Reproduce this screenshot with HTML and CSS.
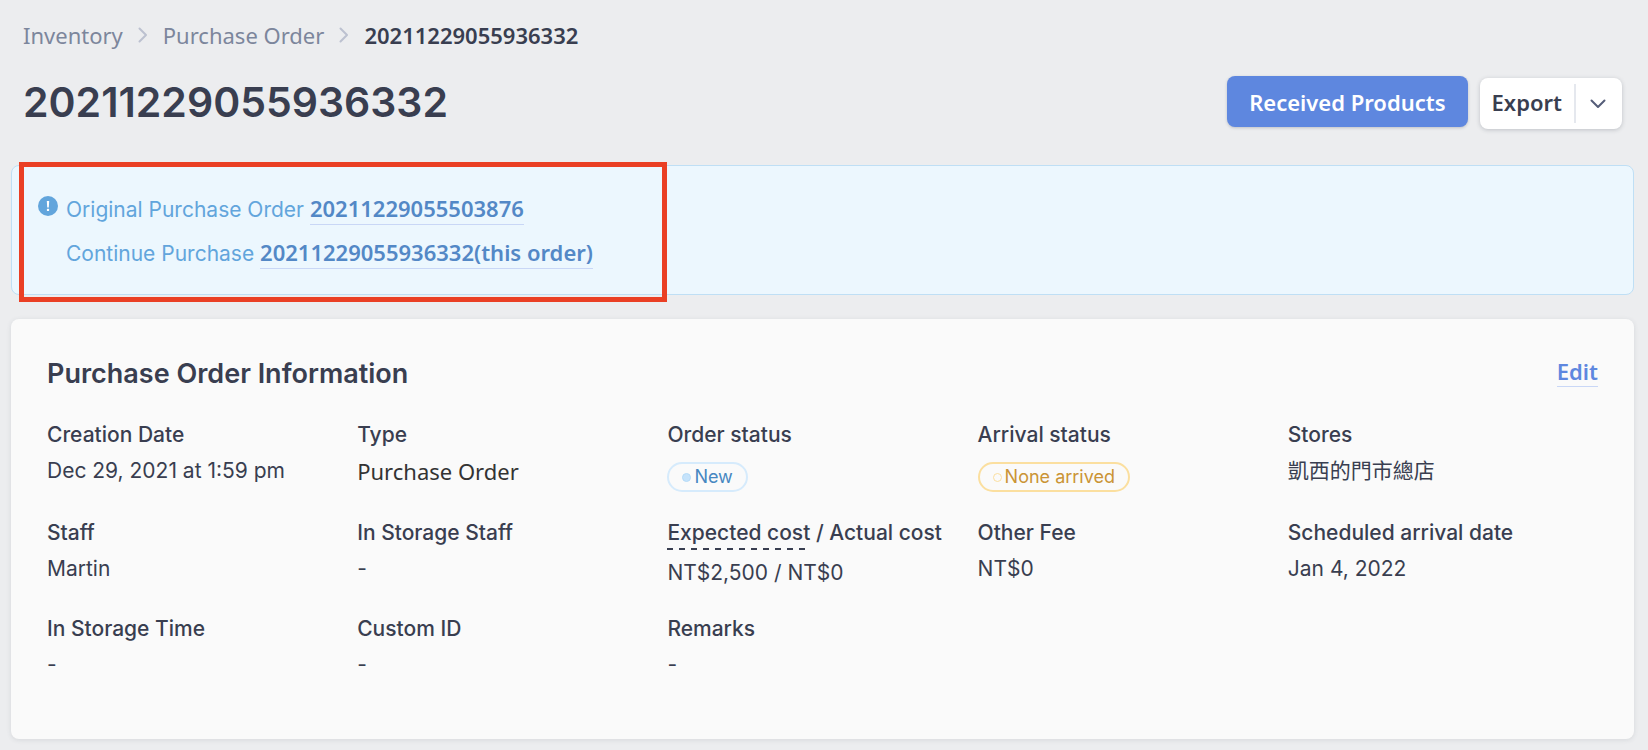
FILE: index.html
```html
<!DOCTYPE html>
<html lang="en">
<head>
<meta charset="utf-8">
<meta name="viewport" content="width=device-width, initial-scale=1">
<title>Purchase Order 20211229055936332</title>
<link rel="stylesheet" href="styles.css">
</head>
<body>
<div class="page">
  <nav class="breadcrumb" aria-label="Breadcrumb">
    <a href="#">Inventory</a>
    <svg class="crumb-arrow" viewBox="0 0 10 16" aria-hidden="true"><path d="M1.500 1.500 8 8l-6.500 6.500"/></svg>
    <a href="#">Purchase Order</a>
    <svg class="crumb-arrow" viewBox="0 0 10 16" aria-hidden="true"><path d="M1.500 1.500 8 8l-6.500 6.500"/></svg>
    <span class="crumb-current" aria-current="page">20211229055936332</span>
  </nav>

  <header class="header">
    <h1 class="title">20211229055936332</h1>
    <div class="actions">
      <button class="btn btn-primary" type="button">Received Products</button>
      <div class="split">
        <button class="btn split-main" type="button">Export</button>
        <button class="btn split-toggle" type="button" aria-label="Export options">
          <svg class="chevron" viewBox="0 0 16 10" aria-hidden="true"><path d="M1.500 1.500 8 8l6.500-6.500"/></svg>
        </button>
      </div>
    </div>
  </header>

  <section class="notice">
    <svg class="notice-icon" viewBox="0 0 20 20" aria-hidden="true"><circle cx="10" cy="10" r="10" fill="#62a5dc"/><path d="M8.800 5h2.400l-.4 6.400H9.200z" fill="#fff"/><rect x="8.900" y="12.800" width="2.200" height="2.200" rx=".6" fill="#fff"/></svg>
    <div class="notice-lines">
      <p class="notice-line">Original Purchase Order <a class="link" href="#">20211229055503876</a></p>
      <p class="notice-line">Continue Purchase <a class="link" href="#">20211229055936332(this order)</a></p>
    </div>
    <div class="highlight"></div>
  </section>

  <section class="card">
    <div class="card-head">
      <h2 class="card-title">Purchase Order Information</h2>
      <a class="link edit" href="#">Edit</a>
    </div>
    <dl class="grid">
      <div class="field"><dt>Creation Date</dt><dd>Dec 29, 2021 at 1:59 pm</dd></div>
      <div class="field"><dt>Type</dt><dd class="type">Purchase Order</dd></div>
      <div class="field"><dt>Order status</dt><dd class="status"><span class="pill pill-new">New</span></dd></div>
      <div class="field"><dt>Arrival status</dt><dd class="status"><span class="pill pill-none">None arrived</span></dd></div>
      <div class="field"><dt>Stores</dt><dd lang="zh-TW">凱西的門市總店</dd></div>
      <div class="field"><dt>Staff</dt><dd>Martin</dd></div>
      <div class="field"><dt>In Storage Staff</dt><dd>-</dd></div>
      <div class="field"><dt><span class="hint">Expected cost</span> / Actual cost</dt><dd>NT$2,500 / NT$0</dd></div>
      <div class="field"><dt>Other Fee</dt><dd>NT$0</dd></div>
      <div class="field"><dt>Scheduled arrival date</dt><dd>Jan 4, 2022</dd></div>
      <div class="field"><dt>In Storage Time</dt><dd>-</dd></div>
      <div class="field"><dt>Custom ID</dt><dd>-</dd></div>
      <div class="field"><dt>Remarks</dt><dd>-</dd></div>
    </dl>
  </section>
</div>
</body>
</html>
```
FILE: styles.css
```css
* { box-sizing: border-box; }

body {
  margin: 0;
  background: #ecedef;
  color: #393e50;
  font-family: Inter, "Noto Sans CJK TC", sans-serif;
  font-size: 21px;
  line-height: 30px;
}

h1, h2, p, dl, dd { margin: 0; }
a { color: inherit; text-decoration: none; }

.page { padding: 19px 14px 11px 11px; }

.breadcrumb {
  display: flex;
  align-items: center;
  gap: 15px;
  padding-left: 12px;
  color: #7c869c;
  font-family: "Noto Sans", sans-serif;
  font-size: 22px;
  line-height: 32px;
}
.crumb-arrow {
  width: 10px;
  height: 16px;
  fill: none;
  stroke: #bcc1d0;
  stroke-width: 2;
  stroke-linecap: round;
  stroke-linejoin: round;
}
.crumb-current { color: #393e50; font-weight: 600; }

.header {
  display: flex;
  align-items: flex-start;
  justify-content: space-between;
  margin-top: 25px;
  padding: 0 12px;
}
.title { font-size: 41px; font-weight: 600; line-height: 52px; }
.actions { display: flex; align-items: flex-start; gap: 12px; }

.btn {
  height: 51px;
  border: 0;
  background: none;
  color: #393e50;
  font: 600 22px/30px "Noto Sans", sans-serif;
  cursor: pointer;
}
.btn-primary {
  padding: 0 22px;
  border-radius: 8px;
  background: #5e87df;
  color: #fff;
  box-shadow: 0 1px 3px rgba(57, 62, 80, .25);
}
.split {
  display: flex;
  align-items: center;
  margin-top: 2px;
  border-radius: 8px;
  background: #fff;
  box-shadow: 0 1px 4px rgba(57, 62, 80, .25);
}
.split-main { padding: 0 12px 3px; }
.split-toggle {
  display: flex;
  align-items: center;
  justify-content: center;
  width: 48px;
  height: 39px;
  padding: 0 2px 0 0;
  border-left: 2px solid #e5e8ee;
}
.chevron {
  width: 16px;
  height: 10px;
  fill: none;
  stroke: #555d78;
  stroke-width: 2;
  stroke-linecap: round;
  stroke-linejoin: round;
}

.notice {
  position: relative;
  display: flex;
  gap: 8px;
  margin-top: 36px;
  padding: 22px 26px 18px;
  border: 1px solid #bfdff5;
  border-radius: 8px;
  background: #ecf7fe;
  color: #62a5dc;
}
.notice-icon { flex: none; width: 20px; height: 20px; margin-top: 8px; }
.notice-line { line-height: 44px; }
.link {
  display: inline-block;
  border-bottom: 1px solid #c9d7f6;
  color: #5388c6;
  font: 600 22px/30px "Noto Sans", sans-serif;
}
.notice .link { line-height: 32px; }
.highlight {
  position: absolute;
  top: -4px;
  left: 7px;
  width: 648px;
  height: 140px;
  border: 5px solid #ea3f24;
  pointer-events: none;
}

.card {
  margin-top: 24px;
  padding: 37px 36px 59px;
  border-radius: 8px;
  background: #fafafa;
  box-shadow: 0 1px 5px rgba(57, 62, 80, .12);
}
.card-head { display: flex; align-items: flex-start; justify-content: space-between; }
.card-title { font-size: 27px; font-weight: 600; line-height: 36px; }
.edit { color: #5e87df; }

.grid {
  display: grid;
  grid-template-columns: repeat(5, minmax(0, 1fr));
  row-gap: 26px;
  margin-top: 28px;
}
.field dt { font-weight: 500; white-space: nowrap; }
.field dd { margin-top: 6px; }
.field .type { color: #333; font-family: "Noto Sans", sans-serif; font-size: 22px; }
.field .status { display: flex; margin-top: 12px; }
.hint {
  display: inline-block;
  padding-bottom: 4px;
  background: repeating-linear-gradient(90deg, #393e50 0 6px, transparent 6px 12px) left bottom 2px / 100% 2px no-repeat;
}

.pill {
  display: inline-flex;
  align-items: center;
  gap: 3px;
  height: 30px;
  padding: 0 13px;
  border: 2px solid;
  border-radius: 15px;
  font-size: 18px;
}
.pill::before {
  content: "";
  width: 7px;
  height: 7px;
  border: 1px solid;
  border-radius: 50%;
}
.pill-new { border-color: #d6ebfc; color: #4787c1; }
.pill-new::before { border-color: #b5dbf8; background: #c6e3fb; }
.pill-none { border-color: #fbdf9f; color: #ca9435; }
.pill-none::before { border-color: #fbdf9f; }
```
